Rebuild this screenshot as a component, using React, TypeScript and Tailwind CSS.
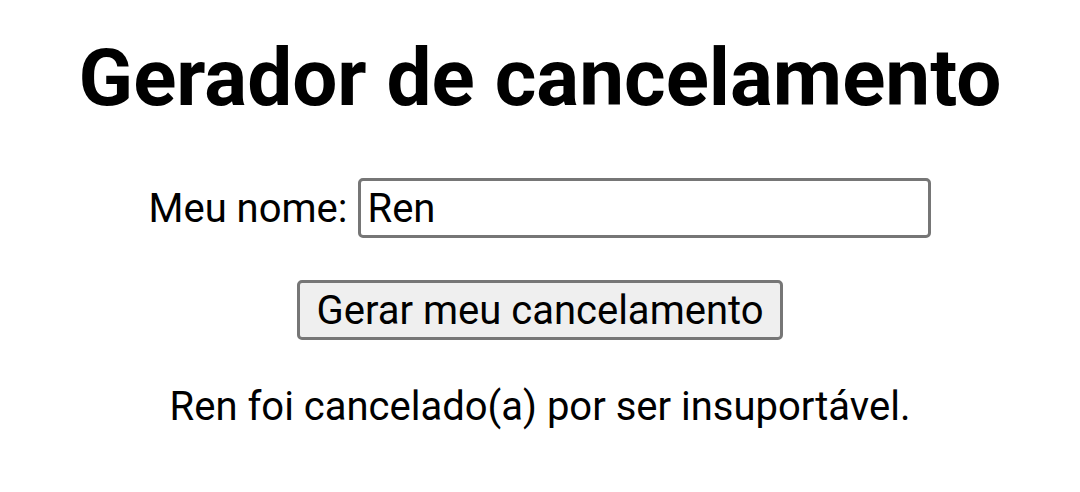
import React, { useState } from "react";

export default function App() {
  const [name, setName] = useState("Ren");
  return (
    <div
      className="flex min-h-[492px] w-full flex-col items-center bg-white text-black"
      style={{ fontFamily: "Roboto, 'Noto Sans', sans-serif" }}
    >
      <h1 className="mt-[31px] text-[80px] font-bold leading-[94px]">Gerador de cancelamento</h1>
      <div className="mt-[53px] flex h-[60px] items-center">
        <label className="text-[40px] leading-[47px]">Meu nome:</label>
        <input
          value={name}
          onChange={(e) => setName(e.target.value)}
          className="ml-[11px] h-[60px] w-[573px] rounded-[5px] border-[3px] border-[#767676] bg-white px-[6px] text-[40px] leading-[47px] text-black outline-none"
          style={{ fontFamily: "Roboto, 'Noto Sans', sans-serif" }}
        />
      </div>
      <button className="mt-[42px] h-[60px] w-[486px] rounded-[5px] border-[3px] border-[#767676] bg-[#efefef] text-[40px] leading-[47px] text-black">
        Gerar meu cancelamento
      </button>
      <p className="mt-[43px] text-[40px] leading-[47px]">
        {name} foi cancelado(a) por ser insuportável.
      </p>
    </div>
  );
}
